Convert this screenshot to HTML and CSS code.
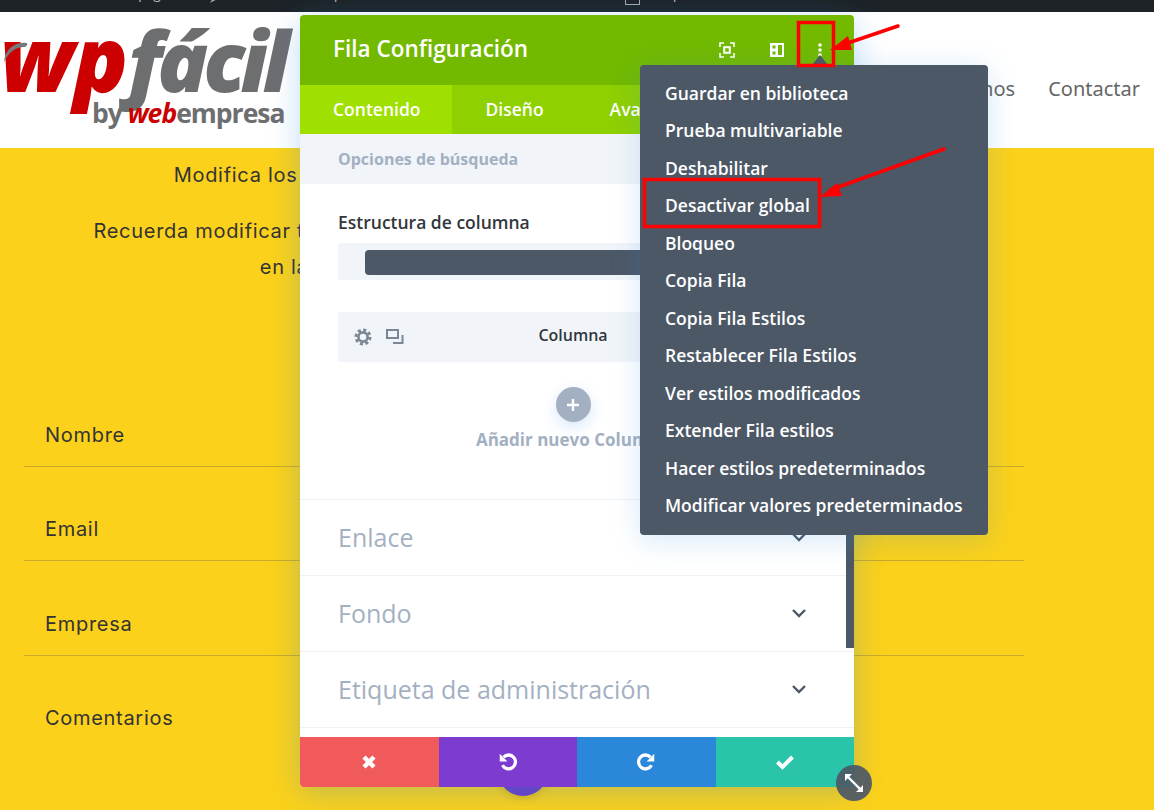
FILE: index.html
```html
<!DOCTYPE html>
<html lang="es">
<head>
<meta charset="utf-8">
<title>Fila Configuración</title>
<link rel="stylesheet" href="styles.css">
</head>
<body>
<div class="page">
  <div class="topbar">
    <span class="tb-item tb-a">Mi página</span>
    <svg class="tb-icon" width="20" height="12" viewBox="0 0 20 12"><path d="M1 0v4h3l-2 3 6-3h11V0z" fill="none" stroke="#a7aaad" stroke-width="1.5"/></svg>
    <span class="tb-item tb-b">Editar plantilla</span>
    <span class="tb-box"></span>
    <span class="tb-item tb-c">Opciones</span>
  </div>
  <header class="site-header">
    <div class="logo">
      <div class="logo-main"><span class="logo-wp">wp</span><span class="logo-facil">fácil</span></div>
      <div class="logo-sub">by <span class="logo-web">web</span>empresa</div>
      <svg class="logo-swoosh" width="26" height="24" viewBox="0 0 26 24"><path d="M1 21C2 9 11 0 24 2c1 2-1 4-3 4-8 0-15 5-20 15z" fill="#77797b"/></svg>
    </div>
    <nav class="site-nav"><span>Quiénes somos</span><span>Contactar</span></nav>
  </header>
  <main class="content">
    <p class="intro intro-1">Modifica los campos de este formulario de contacto con datos reales</p>
    <p class="intro intro-2">Recuerda modificar también la dirección de correo electrónico para recibir los avisos</p>
    <p class="intro intro-3">en la configuración de tu sitio web de empresa local</p>
    <form class="form">
      <div class="field">Nombre</div>
      <div class="field">Email</div>
      <div class="field">Empresa</div>
      <div class="field field-last">Comentarios</div>
    </form>
  </main>

  <div class="fab"></div>

  <section class="modal">
    <div class="modal-head">
      <h1 class="modal-title">Fila Configuración</h1>
      <div class="head-icons">
        <svg class="icon-focus" width="16" height="16" viewBox="0 0 16 16" fill="none" stroke="#fff" stroke-width="1.6"><path d="M1 5V1h4M11 1h4v4M15 11v4h-4M5 15H1v-4"/><rect x="5.2" y="5.2" width="5.6" height="5.6" stroke-width="2"/></svg>
        <svg class="icon-split" width="16" height="16" viewBox="0 0 16 16"><path fill="#fff" fill-rule="evenodd" d="M1.500 1h13a.5.5 0 0 1 .5.5v13a.5.5 0 0 1-.5.5h-13a.5.5 0 0 1-.5-.5v-13a.5.5 0 0 1 .5-.5zM9 3v10h4V3zM3.500 3.500v3h3v-3zM3.500 9.500v3h3v-3z"/></svg>
        <svg width="16" height="16" viewBox="0 0 16 16" fill="#fff"><circle cx="8" cy="3" r="1.8"/><circle cx="8" cy="8" r="1.8"/><circle cx="8" cy="13" r="1.8"/></svg>
      </div>
    </div>
    <div class="tabs">
      <div class="tab tab-active">Contenido</div>
      <div class="tab">Diseño</div>
      <div class="tab">Avanzado</div>
    </div>
    <div class="search">Opciones de búsqueda</div>
    <div class="modal-body">
      <div class="col-block">
        <div class="col-title">Estructura de columna</div>
        <div class="col-struct"><div class="col-bar"></div></div>
        <div class="col-row">
          <svg class="col-gear" width="18" height="18" viewBox="0 0 18 18" fill="none" stroke="#7b8794"><circle cx="9" cy="9" r="4.6" stroke-width="2.6"/><circle cx="9" cy="9" r="7" stroke-width="3" stroke-dasharray="3 2.5"/></svg>
          <svg class="col-copy" width="18" height="18" viewBox="0 0 18 18" fill="none" stroke="#7b8794" stroke-width="2"><rect x="1" y="2" width="11" height="8"/><path d="M16.500 7v8H7"/></svg>
          <span class="col-name">Columna</span>
        </div>
        <div class="add">
          <div class="add-btn"><svg width="14" height="14" viewBox="0 0 14 14"><path d="M7 1v12M1 7h12" stroke="#fff" stroke-width="2.4"/></svg></div>
          <div class="add-label">Añadir nuevo Columna</div>
        </div>
      </div>
      <div class="toggle"><span>Enlace</span><svg class="chev" width="16" height="10" viewBox="0 0 16 10"><path d="M2 2l6 6 6-6" fill="none" stroke="#4c5866" stroke-width="2.4"/></svg></div>
      <div class="toggle"><span>Fondo</span><svg class="chev" width="16" height="10" viewBox="0 0 16 10"><path d="M2 2l6 6 6-6" fill="none" stroke="#4c5866" stroke-width="2.4"/></svg></div>
      <div class="toggle"><span>Etiqueta de administración</span><svg class="chev" width="16" height="10" viewBox="0 0 16 10"><path d="M2 2l6 6 6-6" fill="none" stroke="#4c5866" stroke-width="2.4"/></svg></div>
      <div class="scrollbar"></div>
    </div>
    <div class="modal-foot">
      <div class="foot-btn btn-red"><svg width="16" height="16" viewBox="0 0 16 16"><path d="M3 3l10 10M13 3L3 13" stroke="#fff" stroke-width="4.4"/></svg></div>
      <div class="foot-btn btn-purple"><svg width="22" height="22" viewBox="0 0 20 20" fill="none"><path d="M6 5.500a6.300 6.300 0 1 1-1 7.500" stroke="#fff" stroke-width="3"/><path d="M2.500 2.500v7h7z" fill="#fff"/></svg></div>
      <div class="foot-btn btn-blue"><svg width="22" height="22" viewBox="0 0 20 20" fill="none"><path d="M14 5.500a6.300 6.300 0 1 0 1 7.500" stroke="#fff" stroke-width="3"/><path d="M17.500 2.500v7h-7z" fill="#fff"/></svg></div>
      <div class="foot-btn btn-green"><svg width="20" height="16" viewBox="0 0 20 16"><path d="M2.500 8l5 5L17.500 3" fill="none" stroke="#fff" stroke-width="4"/></svg></div>
    </div>
    <div class="resize"><svg width="22" height="22" viewBox="0 0 22 22"><path d="M5 5l12 12" stroke="#fff" stroke-width="2.4"/><path d="M2 2h7L2 9zM20 20h-7l7-7z" fill="#fff"/></svg></div>
  </section>

  <ul class="menu">
    <li>Guardar en biblioteca</li>
    <li>Prueba multivariable</li>
    <li>Deshabilitar</li>
    <li>Desactivar global</li>
    <li>Bloqueo</li>
    <li>Copia Fila</li>
    <li>Copia Fila Estilos</li>
    <li>Restablecer Fila Estilos</li>
    <li>Ver estilos modificados</li>
    <li>Extender Fila estilos</li>
    <li>Hacer estilos predeterminados</li>
    <li>Modificar valores predeterminados</li>
  </ul>

  <svg class="notes" width="1154" height="810" viewBox="0 0 1154 810">
    <path d="M812 65l8-10 8 10z" fill="#4c5866"/>
    <rect x="798.500" y="22.500" width="35" height="43" fill="none" stroke="#f00" stroke-width="3.500"/>
    <rect x="644.500" y="179.500" width="175" height="47" fill="none" stroke="#f00" stroke-width="3.500"/>
    <path d="M898 26L845 44" stroke="#f00" stroke-width="3.500" stroke-linecap="round"/>
    <path d="M830 50l18-14 4 14z" fill="#f00"/>
    <path d="M944 149L830 190" stroke="#f00" stroke-width="3.500" stroke-linecap="round"/>
    <path d="M820 197l17-14 5 13z" fill="#f00"/>
  </svg>
</div>
</body>
</html>
```
FILE: styles.css
```css
* { box-sizing: border-box; }
html, body { margin: 0; padding: 0; }
body { font-family: "Open Sans", "Noto Sans", sans-serif; background: #fbd11b; overflow: hidden; }
.page { position: relative; width: 1154px; height: 810px; overflow: hidden; }

.topbar { height: 12px; background: #1d2327; display: flex; overflow: hidden; color: #c3c4c7; font-size: 13px; line-height: 12px; }
.tb-item { position: relative; top: -12px; white-space: nowrap; }
.tb-a { margin-left: 120px; width: 90px; }
.tb-icon { flex: none; margin-right: 65px; margin-top: -6px; }
.tb-b { width: 330px; }
.tb-box { flex: none; width: 15px; height: 5px; border: 1px solid #a7aaad; border-top: 0; margin-right: 23px; }
.tb-c { width: 100px; }

.site-header { height: 136px; background: #fff; display: flex; justify-content: space-between; align-items: flex-start; }
.logo { position: relative; width: 300px; height: 136px; overflow: hidden; }
.logo-swoosh { position: absolute; left: 3px; top: 29px; }
.logo-main { font-weight: 800; font-style: italic; font-size: 84px; line-height: 84px; white-space: nowrap; margin-top: 3px; }
.logo-wp { color: #cc0000; font-size: 90px; line-height: 84px; letter-spacing: -.5px; }
.logo-facil { color: #6d6e70; letter-spacing: -5px; }
.logo-sub { font-weight: 700; font-size: 26.500px; line-height: 30px; color: #6d6e70; margin: -4px 0 0 92px; letter-spacing: -1px; white-space: nowrap; }
.logo-web { color: #cc0000; font-style: italic; }
.site-nav { display: flex; gap: 33px; padding: 64px 14px 0 0; font-family: "Noto Sans", sans-serif; font-size: 20px; line-height: 26px; color: #666; }

.content { color: #333; font-family: Inter, sans-serif; font-size: 20px; letter-spacing: .7px; }
.intro { margin: 0; width: 1048px; text-align: center; line-height: 36px; white-space: nowrap; }
.intro-1 { padding-top: 9px; margin-bottom: 20px; }
.form { width: 1000px; margin: 0 0 0 24px; padding-top: 88px; }
.form .field:first-child { margin-top: -1px; }
.field { height: 94.500px; padding: 49.500px 21px 0; line-height: 26px; border-bottom: 1px solid #c9a92c; }
.field-last { border-bottom: 0; }

.fab { position: absolute; left: 498px; top: 746px; width: 50px; height: 50px; border-radius: 50%; background: #6d3cc0; box-shadow: 0 2px 8px rgba(0,0,0,.15); }

.modal { position: absolute; left: 300px; top: 15px; width: 554px; height: 772px; background: #fff; border-radius: 4px; display: flex; flex-direction: column; box-shadow: 0 5px 30px rgba(43,135,218,.3); }
.modal-head { flex: none; height: 70px; background: #72b900; border-radius: 4px 4px 0 0; display: flex; align-items: center; justify-content: space-between; padding: 0 26px 0 33px; }
.modal-title { margin: 0 0 3px; color: #fff; font-size: 22.500px; font-weight: 600; line-height: 30px; }
.head-icons { display: flex; }
.icon-focus { margin-right: 34px; }
.icon-split { margin-right: 27px; }
.tabs { flex: none; height: 49px; display: flex; background: #8ed000; color: #fff; font-size: 17.500px; font-weight: 600; line-height: 49px; }
.tab { padding: 0 33px; }
.tab-active { background: #a0e000; padding: 0 32px 0 33px; }
.search { flex: none; height: 50px; background: #f1f5f9; color: #a3b0c2; font-size: 16px; font-weight: 700; line-height: 50px; padding-left: 38px; }
.modal-body { flex: 1; position: relative; overflow: hidden; }
.col-block { padding: 26px 38px 0; height: 316px; border-bottom: 1px solid #f0f1f2; }
.col-title { font-size: 17.500px; font-weight: 600; line-height: 24px; color: #32373c; }
.col-struct { margin-top: 9px; height: 37px; background: #f1f5f9; border-radius: 3px; padding: 7px 0 0 27px; }
.col-bar { height: 25px; width: 430px; background: #4c5866; border-radius: 4px; }
.col-row { position: relative; margin-top: 32px; height: 50px; background: #f1f5f9; border-radius: 3px; display: flex; align-items: center; padding-left: 16px; gap: 14px; }
.col-name { position: absolute; left: 0; right: 8px; top: 11px; text-align: center; font-size: 16px; line-height: 24px; font-weight: 600; color: #32373c; }
.add { margin-top: 25px; padding-right: 8px; display: flex; flex-direction: column; align-items: center; }
.add-btn { width: 35px; height: 35px; border-radius: 50%; background: #a3b0c2; display: flex; align-items: center; justify-content: center; box-shadow: 0 5px 15px rgba(43,135,218,.2); }
.add-label { margin-top: 6px; font-size: 17px; font-weight: 700; line-height: 24px; color: #a3b0c2; white-space: nowrap; }
.toggle { height: 76px; border-bottom: 1px solid #f0f1f2; display: flex; align-items: center; justify-content: space-between; padding: 0 47px 2px 38px; font-size: 25px; color: #a3b0c2; }
.scrollbar { position: absolute; right: 0; top: 0; width: 8px; height: 464px; background: #4c5866; }
.modal-foot { flex: none; height: 50px; display: flex; }
.foot-btn { flex: 1; display: flex; align-items: center; justify-content: center; }
.btn-red { background: #f15a5a; border-radius: 0 0 0 4px; }
.btn-purple { background: #7e3bd0; }
.btn-blue { background: #2b87da; }
.btn-green { background: #29c4a9; }
.resize { position: absolute; right: -18px; bottom: -14px; width: 36px; height: 36px; border-radius: 50%; background: rgba(76,88,102,.92); display: flex; align-items: center; justify-content: center; }

.menu { position: absolute; left: 640px; top: 65px; width: 348px; height: 470px; margin: 0; padding: 9.750px 0 0 25px; list-style: none; background: #4c5866; border-radius: 4px; color: #fff; font-size: 17.500px; font-weight: 600; box-shadow: 0 5px 30px rgba(43,135,218,.2); }
.menu li { height: 37.500px; line-height: 37.500px; white-space: nowrap; }
.notes { position: absolute; left: 0; top: 0; pointer-events: none; }
```
